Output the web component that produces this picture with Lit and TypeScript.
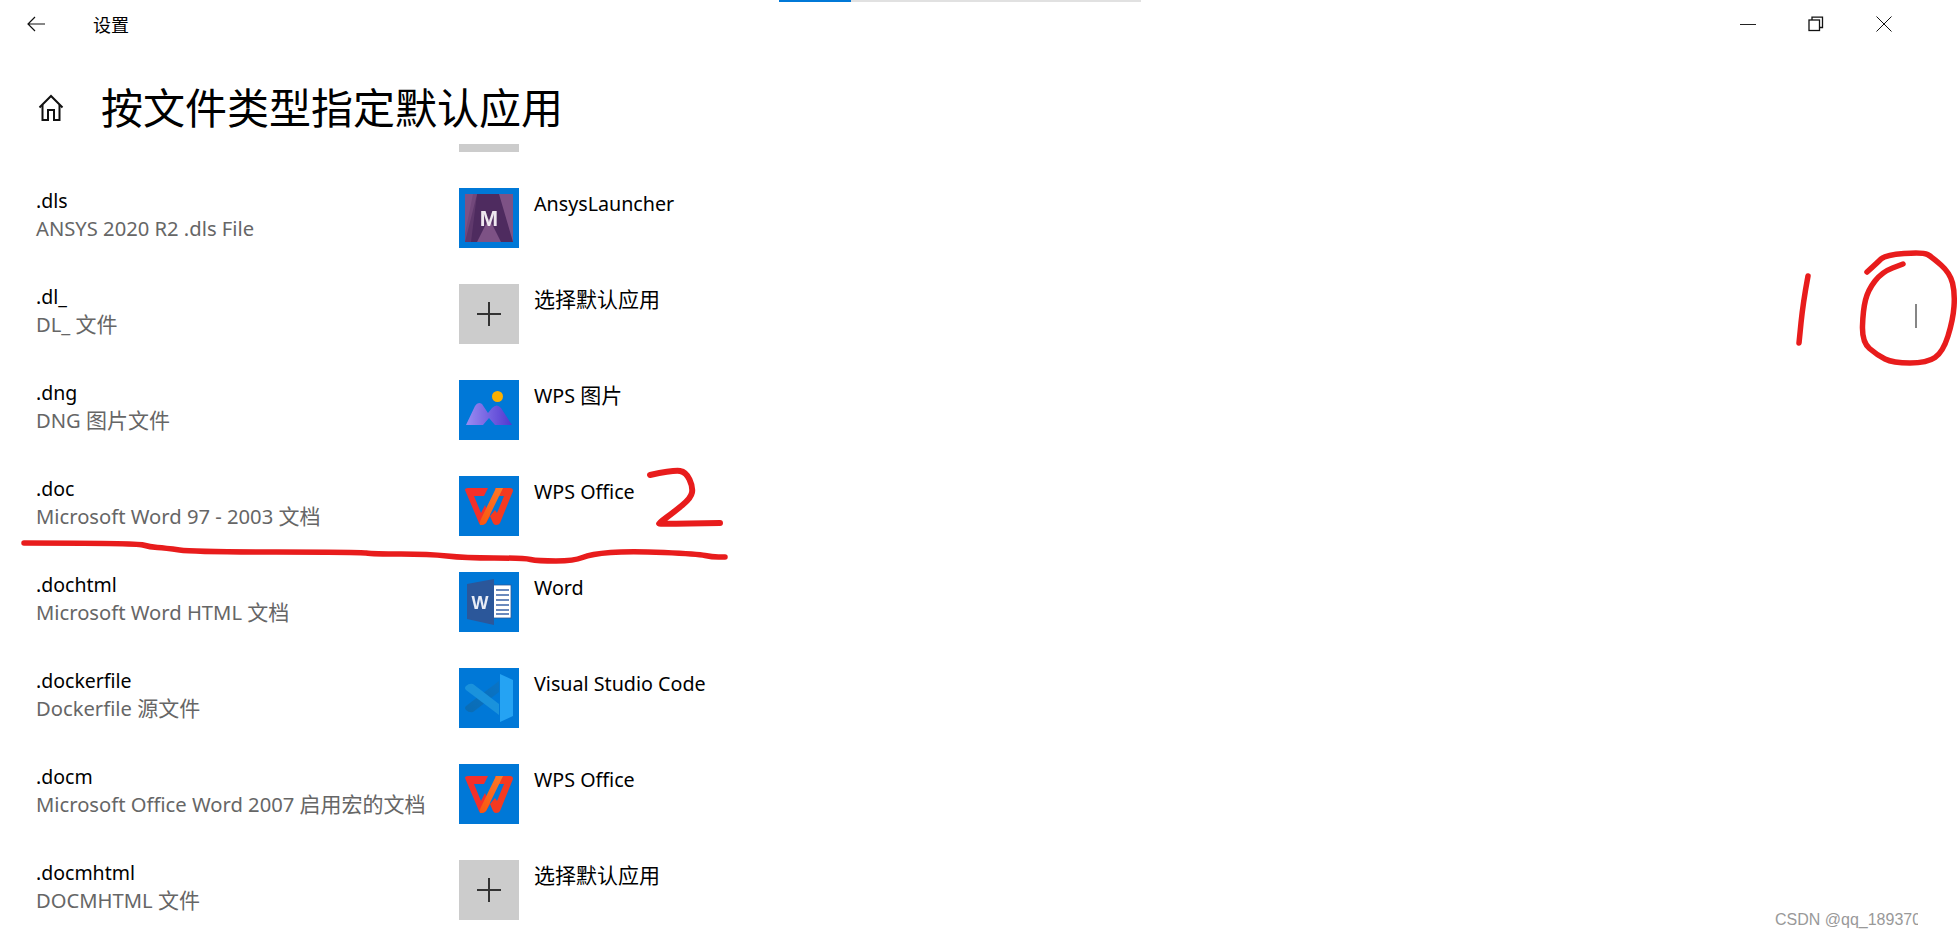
import { LitElement, html, css, svg } from "lit";
import { customElement } from "lit/decorators.js";

type Row = { ext: string; desc: string; app: string; icon: string };

const rows: Row[] = [
  { ext: ".dls", desc: "ANSYS 2020 R2 .dls File", app: "AnsysLauncher", icon: "ansys" },
  { ext: ".dl_", desc: "DL_ 文件", app: "选择默认应用", icon: "plus" },
  { ext: ".dng", desc: "DNG 图片文件", app: "WPS 图片", icon: "pic" },
  { ext: ".doc", desc: "Microsoft Word 97 - 2003 文档", app: "WPS Office", icon: "wps" },
  { ext: ".dochtml", desc: "Microsoft Word HTML 文档", app: "Word", icon: "word" },
  { ext: ".dockerfile", desc: "Dockerfile 源文件", app: "Visual Studio Code", icon: "vscode" },
  { ext: ".docm", desc: "Microsoft Office Word 2007 启用宏的文档", app: "WPS Office", icon: "wps" },
  { ext: ".docmhtml", desc: "DOCMHTML 文件", app: "选择默认应用", icon: "plus" },
];

const icons: Record<string, unknown> = {
  ansys: svg`
    <rect x="6" y="6" width="48" height="48" fill="#7d5285"/>
    <polygon points="18,6 40,6 54,54 42,54 30,30 18,54 6,54" fill="#4e2b5f"/>
    <polygon points="6,54 6,46 14,6 18,6 12,54" fill="#6b4274" opacity="0.6"/>
    <text x="30" y="38" text-anchor="middle" font-family="Liberation Sans, sans-serif" font-weight="700" font-size="22" fill="#efe8f0">M</text>`,
  plus: svg`<path d="M18 30H42M30 18V42" stroke="#333" stroke-width="2" fill="none"/>`,
  pic: svg`
    <defs><linearGradient id="pg" x1="0" x2="1" y1="0" y2="0"><stop offset="0" stop-color="#9a8cf2"/><stop offset="1" stop-color="#5038cf"/></linearGradient></defs>
    <circle cx="38.5" cy="16.5" r="5.5" fill="#fbb000"/>
    <path d="M7 45 L16 26 Q19 21 23 24 L29 33 L33 28 Q38 23 42 28 L53 45 H36 L30 38 L24 45 Z" fill="url(#pg)"/>`,
  wps: svg`
    <defs><linearGradient id="wg" x1="0" x2="1" y1="1" y2="0"><stop offset="0" stop-color="#f9560f"/><stop offset="1" stop-color="#fb7a28"/></linearGradient></defs>
    <path d="M6 14 Q6 12 9 12 H29 L25 20 H15 L22 37 L26 29 L31 40 L27 47 Q25 49 23 49 Q21 49 20 47 Z" fill="#f4302a"/>
    <path d="M36 12 H51 Q54 12 54 15 L41 47 Q40 49 37 49 Q35 49 34 47 L31 40 L36 34 L38 37 L45 20 H38 Z" fill="#f53a20"/>
    <path d="M37 12 H44 L27 47 Q25 49 23 49 H21 Q20 47 22 43 Z" fill="url(#wg)"/>`,
  word: svg`
    <rect x="34" y="13" width="18" height="33" fill="#fff" stroke="#2b579a" stroke-width="0.8"/>
    <path d="M37 18H50M37 23H50M37 28H50M37 33H50M37 38H50M37 42H50" stroke="#3a63a8" stroke-width="1.6" fill="none"/>
    <polygon points="8,12 35,7 35,53 8,47" fill="#2b579a"/>
    <text x="21" y="37" text-anchor="middle" font-family="Liberation Sans, sans-serif" font-weight="700" font-size="18" fill="#e8edf6">W</text>`,
  vscode: svg`
    <defs><linearGradient id="vg" x1="0" x2="1" y1="1" y2="0"><stop offset="0" stop-color="#0a6cb4"/><stop offset="1" stop-color="#0a74c6"/></linearGradient></defs>
    <path d="M7 38 L40 13 V24 L14 44 Q10 45 7 42 Q5 40 7 38 Z" fill="url(#vg)"/>
    <path d="M7 22 L40 47 V36 L14 16 Q10 15 7 18 Q5 20 7 22 Z" fill="#1a92dc"/>
    <polygon points="41,6 54,12 54,48 41,54" fill="#25a3f3"/>`,
};

function smooth(p: number[][]): string {
  let d = `M${p[0][0]} ${p[0][1]}`;
  for (let i = 1; i < p.length - 1; i++) {
    const mx = (p[i][0] + p[i + 1][0]) / 2;
    const my = (p[i][1] + p[i + 1][1]) / 2;
    d += ` Q${p[i][0]} ${p[i][1]} ${mx} ${my}`;
  }
  const l = p[p.length - 1];
  return d + ` L${l[0]} ${l[1]}`;
}

function runs(text: string) {
  return text
    .split(/([\u4e00-\u9fff]+)/)
    .filter((t) => t)
    .map((t) => (/[\u4e00-\u9fff]/.test(t) ? html`<span class="cjk">${t}</span>` : t));
}

const strokes: { pts: number[][]; w: number }[] = [
  {
    w: 5.5,
    pts: [[24, 543], [136, 543], [150, 547], [165, 548], [194, 552], [359, 552], [373, 554], [429, 554], [465, 558], [523, 558], [538, 561], [574, 561], [591, 554], [630, 551], [698, 554], [712, 557], [725, 557]],
  },
  {
    w: 6,
    pts: [[650, 475], [674, 470], [686, 472], [693, 487], [691, 498], [674, 512], [659, 523], [659, 524], [720, 523]],
  },
  { w: 5.5, pts: [[1808, 276], [1803, 303], [1799, 343]] },
  {
    w: 5.5,
    pts: [[1867, 272], [1877, 263], [1885, 255], [1923, 252], [1932, 257], [1950, 273], [1955, 293], [1953, 320], [1943, 352], [1927, 363], [1893, 363], [1877, 355], [1862, 342], [1863, 310], [1868, 290], [1882, 272], [1903, 264]],
  },
];

@customElement("app-root")
export class AppRoot extends LitElement {
  static styles = css`
    :host {
      display: block;
      position: relative;
      width: 1960px;
      height: 937px;
      overflow: hidden;
      background: #fff;
      color: #000;
      font-family: "Noto Sans", "Noto Sans CJK SC", sans-serif;
    }
    .progress {
      position: absolute;
      left: 779px;
      top: 0;
      width: 362px;
      height: 2px;
      background: #e1e1e1;
    }
    .progress div {
      width: 72px;
      height: 2px;
      background: #0078d7;
    }
    .titlebar {
      height: 48px;
      display: flex;
      align-items: center;
    }
    .back {
      width: 18px;
      height: 16px;
      margin-left: 27px;
      display: block;
    }
    .apptitle {
      margin-left: 48px;
      font-size: 18px;
      line-height: 48px;
      font-family: "Noto Sans CJK SC", sans-serif;
    }
    .win {
      margin-left: auto;
      display: flex;
      align-items: center;
      margin-right: 68px;
      gap: 52px;
    }
    .win svg {
      display: block;
      width: 16px;
      height: 16px;
    }
    .head {
      height: 96px;
      box-sizing: border-box;
      padding: 24px 0 0 38px;
      display: flex;
      align-items: center;
    }
    .home {
      width: 26px;
      height: 28px;
      display: block;
    }
    h1 {
      margin: -4px 0 0 37px;
      font-weight: 400;
      font-size: 42px;
      line-height: 60px;
      font-family: "Noto Sans CJK SC", sans-serif;
      white-space: nowrap;
    }
    .stub {
      width: 60px;
      height: 8px;
      margin-left: 459px;
      background: #ccc;
    }
    .list {
      padding-top: 36px;
      display: grid;
      grid-auto-rows: 96px;
    }
    .row {
      display: grid;
      grid-template-columns: 423px 60px 1fr;
      padding-left: 36px;
      align-items: start;
    }
    .lines {
      margin-top: -1px;
    }
    .ext {
      font-size: 19.5px;
      line-height: 28px;
      height: 27px;
      white-space: nowrap;
    }
    .desc {
      font-size: 20.2px;
      line-height: 28px;
      height: 28px;
      color: #666;
      white-space: nowrap;
    }
    .cjk {
      font-size: 21px;
      font-family: "Noto Sans CJK SC", sans-serif;
      line-height: 1;
    }
    .tile {
      width: 60px;
      height: 60px;
      background: #0078d7;
    }
    .tile.add {
      background: #ccc;
    }
    .tile svg {
      display: block;
      width: 60px;
      height: 60px;
    }
    .tile.soft svg {
      filter: blur(0.4px);
    }
    .app {
      margin-left: 15px;
      font-size: 19.7px;
      line-height: 30px;
      height: 30px;
      padding-top: 1px;
      white-space: nowrap;
    }
    .thumb {
      position: absolute;
      left: 1915px;
      top: 304px;
      width: 2px;
      height: 24px;
      background: #868686;
    }
    .ink {
      position: absolute;
      left: 0;
      top: 0;
      width: 1960px;
      height: 937px;
      pointer-events: none;
    }
    .mark {
      position: absolute;
      left: 1775px;
      top: 909px;
      width: 143px;
      overflow: hidden;
      white-space: nowrap;
      font-family: "Liberation Sans", sans-serif;
      font-size: 16px;
      line-height: 22px;
      color: #999;
    }
  `;

  render() {
    return html`
      <div class="progress"><div></div></div>
      <div class="titlebar">
        <svg class="back" viewBox="0 0 18 16" fill="none" stroke="#111" stroke-width="1.2">
          <path d="M18 8H1M8 1L1 8L8 15" />
        </svg>
        <div class="apptitle">设置</div>
        <div class="win">
          <svg viewBox="0 0 16 16" fill="none" stroke="#222" stroke-width="1"><path d="M0 8.5H16" /></svg>
          <svg viewBox="0 0 16 16" fill="none" stroke="#111" stroke-width="1.3">
            <rect x="1" y="4" width="10.5" height="10.5" />
            <path d="M4 4V1.2H14.5V11.5H11.5" />
          </svg>
          <svg viewBox="0 0 16 16" fill="none" stroke="#111" stroke-width="1"><path d="M.5 .5L15.5 15.5M15.5 .5L.5 15.5" /></svg>
        </div>
      </div>
      <div class="head">
        <svg class="home" viewBox="0 0 26 28" fill="none" stroke="#111" stroke-width="2" stroke-linejoin="miter">
          <path d="M1.5 13.5L13 2L24.5 13.5" />
          <path d="M4.5 11V26H10V16H16V26H21.5V11" />
        </svg>
        <h1>按文件类型指定默认应用</h1>
      </div>
      <div class="stub"></div>
      <div class="list">
        ${rows.map(
          (r) => html`
            <div class="row">
              <div class="lines">
                <div class="ext">${r.ext}</div>
                <div class="desc">${runs(r.desc)}</div>
              </div>
              <div class="tile ${r.icon === "plus" ? "add" : "soft"}">
                <svg viewBox="0 0 60 60">${icons[r.icon]}</svg>
              </div>
              <div class="app">${runs(r.app)}</div>
            </div>
          `
        )}
      </div>
      <div class="thumb"></div>
      <svg class="ink" viewBox="0 0 1960 937" fill="none" stroke="#e81c1c" stroke-linecap="round" stroke-linejoin="round">
        ${strokes.map((s) => svg`<path d=${smooth(s.pts)} stroke-width=${s.w} />`)}
      </svg>
      <div class="mark">CSDN @qq_18937080</div>
    `;
  }
}
